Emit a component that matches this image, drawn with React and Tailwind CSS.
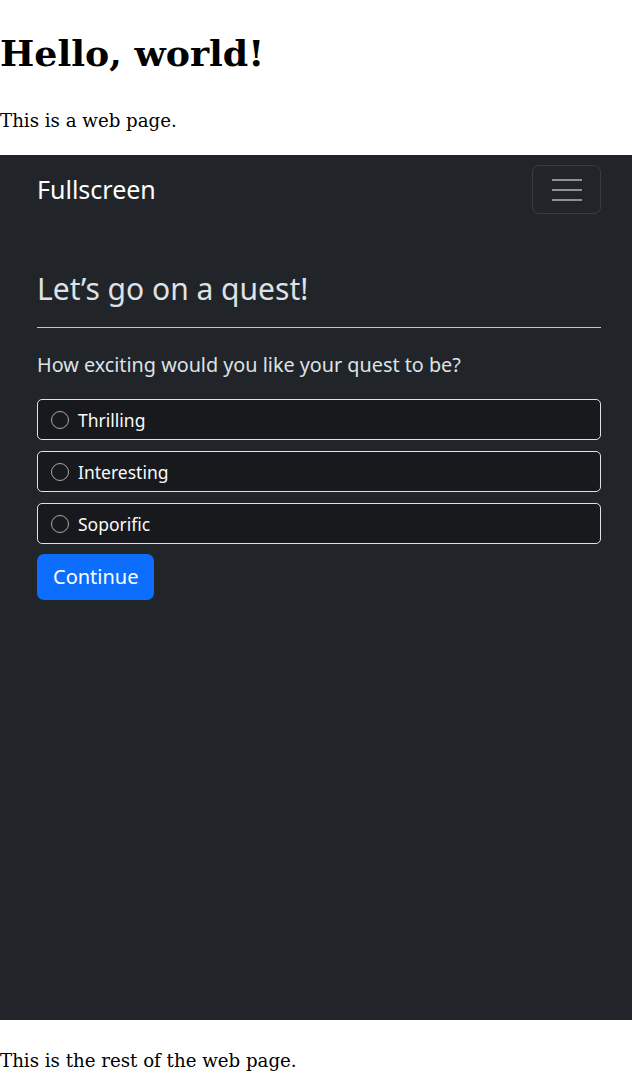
import React, { useState } from "react";

const options = ["Thrilling", "Interesting", "Soporific"];

export default function App() {
  const [choice, setChoice] = useState(null);

  return (
    <div className="bg-white text-black" style={{ fontFamily: '"DejaVu Serif", serif' }}>
      {/* Page header */}
      <div className="pt-[30px]">
        <h1 className="text-[36.3px] font-bold leading-[48px]">Hello, world!</h1>
        <p className="mt-[28px] mb-[19px] text-[18.2px] leading-[30px]">This is a web page.</p>
      </div>

      {/* Fullscreen panel */}
      <div
        className="h-[865px] bg-[#212529] text-[20px] leading-[30px]"
        style={{ fontFamily: '"Noto Sans", sans-serif' }}
      >
        {/* Navbar */}
        <div className="flex items-center justify-between pl-[37px] pr-[31px] py-[10px]">
          <span className="text-[25px] leading-[37px] text-white">Fullscreen</span>
          <button className="flex h-[49px] w-[69px] flex-col items-center justify-center gap-[8px] rounded-[7px] border border-white/10">
            <span className="block h-[2px] w-[30px] bg-[#8e9092]" />
            <span className="block h-[2px] w-[30px] bg-[#8e9092]" />
            <span className="block h-[2px] w-[30px] bg-[#8e9092]" />
          </button>
        </div>

        {/* Quest form */}
        <div className="pl-[37px] pr-[31px] pt-[47px]">
          <h4 className="text-[30px] leading-[36px] text-[#dee2e6]">Let’s go on a quest!</h4>
          <hr className="mt-[20px] mb-[22px] border-0 border-t border-[#c4c6c8]" />
          <p className="text-[19.8px] text-[#dee2e6]">How exciting would you like your quest to be?</p>

          <div className="mt-[19px] flex flex-col gap-[11px]">
            {options.map((opt) => (
              <label
                key={opt}
                className="flex h-[41px] cursor-pointer items-center rounded-[5px] border border-[#dee2e6] bg-[#18191c] pl-[13px]"
                onClick={() => setChoice(opt)}
              >
                <span className="flex h-[18px] w-[18px] items-center justify-center rounded-full border-[1.5px] border-[#a4a6a8]">
                  {choice === opt && <span className="h-[8px] w-[8px] rounded-full bg-[#dee2e6]" />}
                </span>
                <span className="ml-[9px] text-[17.5px] text-[#f8f9fa]">{opt}</span>
              </label>
            ))}
          </div>

          <button className="mt-[10px] h-[46px] rounded-[7px] bg-[#0d6efd] px-[16px] text-white">
            Continue
          </button>
        </div>
      </div>

      <p className="mt-[26px] text-[18.2px] leading-[30px]">This is the rest of the web page.</p>
    </div>
  );
}
